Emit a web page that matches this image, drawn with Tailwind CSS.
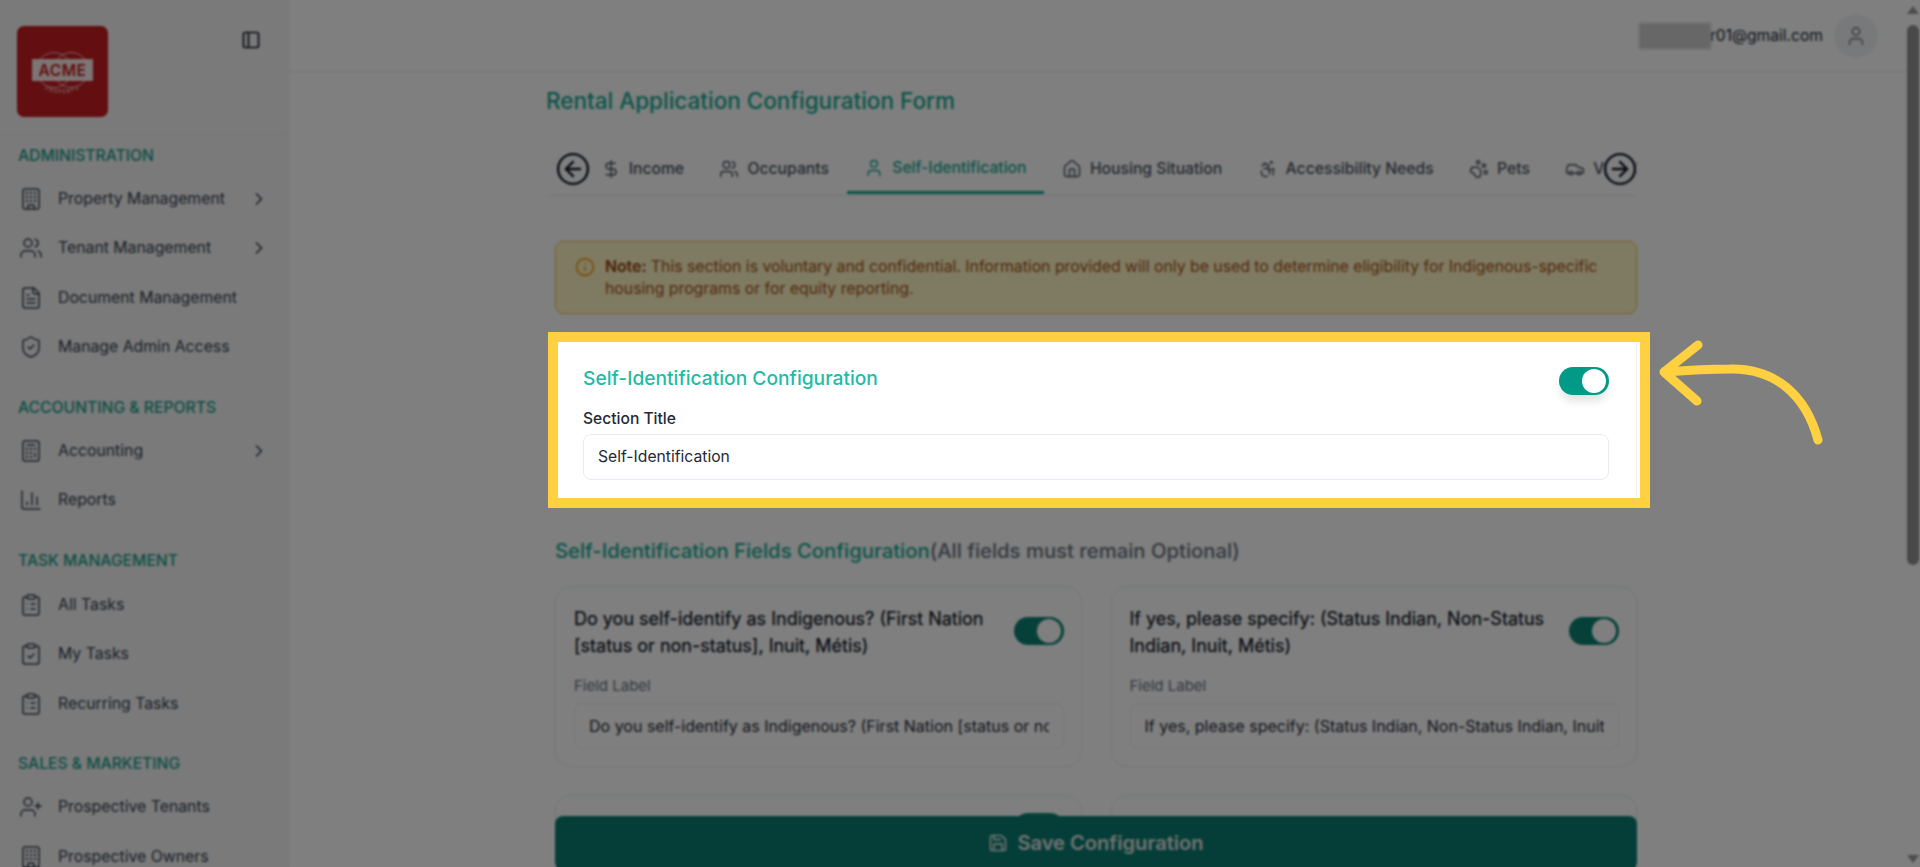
<!doctype html>
<html>
<head>
  <meta charset="UTF-8">
  <title>Rental Application Configuration Form</title>
  <script src="https://cdn.jsdelivr.net/npm/@tailwindcss/browser@4"></script>
</head>
<body class="font-['Inter','Liberation_Sans',sans-serif] bg-[#fcfffd] overflow-hidden">

<!-- icons -->
<svg class="hidden">
  <defs>
    <symbol id="i-building" viewBox="0 0 24 24"><rect width="16" height="20" x="4" y="2" rx="2" ry="2"/><path d="M9 22v-4h6v4"/><path stroke-width="2.3" d="M8 6h.01M16 6h.01M12 6h.01M12 10h.01M12 14h.01M16 10h.01M16 14h.01M8 10h.01M8 14h.01"/></symbol>
    <symbol id="i-users" viewBox="0 0 24 24"><path d="M16 21v-2a4 4 0 0 0-4-4H6a4 4 0 0 0-4 4v2"/><circle cx="9" cy="7" r="4"/><path d="M22 21v-2a4 4 0 0 0-3-3.87"/><path d="M16 3.13a4 4 0 0 1 0 7.75"/></symbol>
    <symbol id="i-file" viewBox="0 0 24 24"><path d="M15 2H6a2 2 0 0 0-2 2v16a2 2 0 0 0 2 2h12a2 2 0 0 0 2-2V7Z"/><path d="M14 2v4a2 2 0 0 0 2 2h4"/><path d="M10 9H8"/><path d="M16 13H8"/><path d="M16 17H8"/></symbol>
    <symbol id="i-shield" viewBox="0 0 24 24"><path d="M20 13c0 5-3.5 7.5-7.66 8.95a1 1 0 0 1-.67-.01C7.5 20.5 4 18 4 13V6a1 1 0 0 1 1-1c2 0 4.5-1.2 6.24-2.72a1.17 1.17 0 0 1 1.52 0C14.51 3.81 17 5 19 5a1 1 0 0 1 1 1z"/><path d="m9 12 2 2 4-4"/></symbol>
    <symbol id="i-calc" viewBox="0 0 24 24"><rect width="16" height="20" x="4" y="2" rx="2"/><line x1="8" x2="16" y1="6" y2="6"/><line x1="16" x2="16" y1="14" y2="18"/><path stroke-width="2.3" d="M16 10h.01M12 10h.01M8 10h.01M12 14h.01M8 14h.01M12 18h.01M8 18h.01"/></symbol>
    <symbol id="i-chart" viewBox="0 0 24 24"><path d="M3 3v16a2 2 0 0 0 2 2h16"/><path d="M18 17V9"/><path d="M13 17V5"/><path d="M8 17v-3"/></symbol>
    <symbol id="i-list" viewBox="0 0 24 24"><rect width="8" height="4" x="8" y="2" rx="1" ry="1"/><path d="M16 4h2a2 2 0 0 1 2 2v14a2 2 0 0 1-2 2H6a2 2 0 0 1-2-2V6a2 2 0 0 1 2-2h2"/><path d="M12 11h4"/><path d="M12 16h4"/><path d="M8 11h.01"/><path d="M8 16h.01"/></symbol>
    <symbol id="i-check" viewBox="0 0 24 24"><rect width="8" height="4" x="8" y="2" rx="1" ry="1"/><path d="M16 4h2a2 2 0 0 1 2 2v14a2 2 0 0 1-2 2H6a2 2 0 0 1-2-2V6a2 2 0 0 1 2-2h2"/><path d="m9 14 2 2 4-4"/></symbol>
    <symbol id="i-userplus" viewBox="0 0 24 24"><path d="M16 21v-2a4 4 0 0 0-4-4H6a4 4 0 0 0-4 4v2"/><circle cx="9" cy="7" r="4"/><line x1="19" x2="19" y1="8" y2="14"/><line x1="22" x2="16" y1="11" y2="11"/></symbol>
    <symbol id="i-user" viewBox="0 0 24 24"><path d="M19 21v-2a4 4 0 0 0-4-4H9a4 4 0 0 0-4 4v2"/><circle cx="12" cy="7" r="4"/></symbol>
    <symbol id="i-chev" viewBox="0 0 24 24"><path d="m9 18 6-6-6-6"/></symbol>
    <symbol id="i-dollar" viewBox="0 0 24 24"><line x1="12" x2="12" y1="2" y2="22"/><path d="M17 5H9.5a3.5 3.5 0 0 0 0 7h5a3.5 3.5 0 0 1 0 7H6"/></symbol>
    <symbol id="i-house" viewBox="0 0 24 24"><path d="M15 21v-8a1 1 0 0 0-1-1h-4a1 1 0 0 0-1 1v8"/><path d="M3 10a2 2 0 0 1 .709-1.528l7-5.999a2 2 0 0 1 2.582 0l7 5.999A2 2 0 0 1 21 10v9a2 2 0 0 1-2 2H5a2 2 0 0 1-2-2z"/></symbol>
    <symbol id="i-access" viewBox="0 0 24 24"><circle cx="16" cy="4" r="1"/><path d="m18 19 1-7-6 1"/><path d="m5 8 3-3 5.5 3-2.36 3.5"/><path d="M4.24 14.5a5 5 0 0 0 6.88 6"/><path d="M13.76 17.5a5 5 0 0 0-6.88-6"/></symbol>
    <symbol id="i-paw" viewBox="0 0 24 24"><circle cx="11" cy="4" r="2"/><circle cx="18" cy="8" r="2"/><circle cx="20" cy="16" r="2"/><path d="M9 10a5 5 0 0 1 5 5v3.5a3.5 3.5 0 0 1-6.84 1.045Q6.52 17.48 4.46 16.84A3.5 3.5 0 0 1 5.5 10Z"/></symbol>
    <symbol id="i-car" viewBox="0 0 24 24"><path d="M19 17h2c.6 0 1-.4 1-1v-3c0-.9-.7-1.7-1.5-1.9C18.7 10.6 16 10 16 10s-1.3-1.4-2.2-2.3c-.5-.4-1.1-.7-1.8-.7H5c-.6 0-1.1.4-1.4.9l-1.4 2.9A3.7 3.7 0 0 0 2 12v4c0 .6.4 1 1 1h2"/><circle cx="7" cy="17" r="2"/><path d="M9 17h6"/><circle cx="17" cy="17" r="2"/></symbol>
  </defs>
</svg>

<div class="relative flex h-[867px] w-[1920px] overflow-hidden">

  <!-- sidebar -->
  <aside class="w-[289px] shrink-0 h-full bg-[#f5f5f5] border-r border-[#eceeee] overflow-hidden text-[#374151] text-[15.8px]">
    <div class="h-[135px] border-b border-[#e8e8e8] pl-[17px] pt-[26px] flex items-start justify-between pr-[27px]">
      <svg class="w-[91px] h-[91px] rounded-[7px]" viewBox="0 0 91 91">
        <rect width="91" height="91" fill="#c61c20"/>
        <g fill="none" stroke="#fff" stroke-opacity=".75" stroke-width="1">
          <circle cx="37" cy="44" r="17.5"/>
          <circle cx="54" cy="44" r="17.5"/>
        </g>
        <rect x="15" y="33" width="61" height="22" fill="#fff" fill-opacity=".9"/>
        <text x="45.5" y="50" text-anchor="middle" font-size="15.5" font-weight="600" letter-spacing=".6" fill="#c61c20">ACME</text>
        <path id="logoarc" d="M26 63 Q45.5 72 65 63" fill="none"/>
        <text font-size="5.5" letter-spacing="1" fill="#fff" fill-opacity=".9"><textPath href="#logoarc" startOffset="50%" text-anchor="middle">PROPERTY</textPath></text>
      </svg>
      <svg class="w-5 h-5 mt-[4px] text-[#111827]" viewBox="0 0 24 24" fill="none" stroke="currentColor" stroke-width="2" stroke-linecap="round" stroke-linejoin="round"><rect width="18" height="18" x="3" y="3" rx="2"/><path d="M9 3v18"/></svg>
    </div>

    <nav class="pt-[11px]">
      <h3 class="pl-[18px] h-5 leading-5 font-medium text-[15.7px] text-[#17a08c]">ADMINISTRATION</h3>
      <ul class="mt-2">
        <li class="h-[49.5px] pl-[19px] pr-[19px] flex items-center"><svg class="w-6 h-6 shrink-0 fill-none stroke-current stroke-[1.5] [stroke-linecap:round] [stroke-linejoin:round]"><use href="#i-building"/></svg><span class="ml-[15px] flex-1">Property Management</span><svg class="w-5 h-5 fill-none stroke-current stroke-2 [stroke-linecap:round] [stroke-linejoin:round]"><use href="#i-chev"/></svg></li>
        <li class="h-[49.5px] pl-[19px] pr-[19px] flex items-center"><svg class="w-6 h-6 shrink-0 fill-none stroke-current stroke-[1.5] [stroke-linecap:round] [stroke-linejoin:round]"><use href="#i-users"/></svg><span class="ml-[15px] flex-1">Tenant Management</span><svg class="w-5 h-5 fill-none stroke-current stroke-2 [stroke-linecap:round] [stroke-linejoin:round]"><use href="#i-chev"/></svg></li>
        <li class="h-[49.5px] pl-[19px] pr-[19px] flex items-center"><svg class="w-6 h-6 shrink-0 fill-none stroke-current stroke-[1.5] [stroke-linecap:round] [stroke-linejoin:round]"><use href="#i-file"/></svg><span class="ml-[15px] flex-1">Document Management</span></li>
        <li class="h-[49.5px] pl-[19px] pr-[19px] flex items-center"><svg class="w-6 h-6 shrink-0 fill-none stroke-current stroke-[1.5] [stroke-linecap:round] [stroke-linejoin:round]"><use href="#i-shield"/></svg><span class="ml-[15px] flex-1">Manage Admin Access</span></li>
      </ul>

      <h3 class="mt-[26px] pl-[18px] h-5 leading-5 font-medium text-[15.7px] text-[#17a08c]">ACCOUNTING &amp; REPORTS</h3>
      <ul class="mt-[8px]">
        <li class="h-[49.5px] pl-[19px] pr-[19px] flex items-center"><svg class="w-6 h-6 shrink-0 fill-none stroke-current stroke-[1.5] [stroke-linecap:round] [stroke-linejoin:round]"><use href="#i-calc"/></svg><span class="ml-[15px] flex-1">Accounting</span><svg class="w-5 h-5 fill-none stroke-current stroke-2 [stroke-linecap:round] [stroke-linejoin:round]"><use href="#i-chev"/></svg></li>
        <li class="h-[49.5px] pl-[19px] pr-[19px] flex items-center"><svg class="w-6 h-6 shrink-0 fill-none stroke-current stroke-[1.5] [stroke-linecap:round] [stroke-linejoin:round]"><use href="#i-chart"/></svg><span class="ml-[15px] flex-1">Reports</span></li>
      </ul>

      <h3 class="mt-[26px] pl-[18px] h-5 leading-5 font-medium text-[15.7px] text-[#17a08c]">TASK MANAGEMENT</h3>
      <ul class="mt-[9px]">
        <li class="h-[49.5px] pl-[19px] pr-[19px] flex items-center"><svg class="w-6 h-6 shrink-0 fill-none stroke-current stroke-[1.5] [stroke-linecap:round] [stroke-linejoin:round]"><use href="#i-list"/></svg><span class="ml-[15px] flex-1">All Tasks</span></li>
        <li class="h-[49.5px] pl-[19px] pr-[19px] flex items-center"><svg class="w-6 h-6 shrink-0 fill-none stroke-current stroke-[1.5] [stroke-linecap:round] [stroke-linejoin:round]"><use href="#i-check"/></svg><span class="ml-[15px] flex-1">My Tasks</span></li>
        <li class="h-[49.5px] pl-[19px] pr-[19px] flex items-center"><svg class="w-6 h-6 shrink-0 fill-none stroke-current stroke-[1.5] [stroke-linecap:round] [stroke-linejoin:round]"><use href="#i-list"/></svg><span class="ml-[15px] flex-1">Recurring Tasks</span></li>
      </ul>

      <h3 class="mt-[25px] pl-[18px] h-5 leading-5 font-medium text-[15.7px] text-[#17a08c]">SALES &amp; MARKETING</h3>
      <ul class="mt-[9px]">
        <li class="h-[49.5px] pl-[19px] pr-[19px] flex items-center"><svg class="w-6 h-6 shrink-0 fill-none stroke-current stroke-[1.5] [stroke-linecap:round] [stroke-linejoin:round]"><use href="#i-userplus"/></svg><span class="ml-[15px] flex-1">Prospective Tenants</span></li>
        <li class="h-[49.5px] pl-[19px] pr-[19px] flex items-center"><svg class="w-6 h-6 shrink-0 fill-none stroke-current stroke-[1.5] [stroke-linecap:round] [stroke-linejoin:round]"><use href="#i-building"/></svg><span class="ml-[15px] flex-1">Prospective Owners</span></li>
      </ul>
    </nav>
  </aside>

  <!-- main column -->
  <main class="flex-1 min-w-0 h-full flex flex-col">
    <header class="h-[72px] shrink-0 border-b border-[#e5e7eb] flex items-center justify-end pr-[28px]">
      <div class="flex items-center text-[15.6px] text-[#1f2937] pt-[1px]">
        <span class="relative pl-[71px]"><span class="absolute left-0 -top-[1px] w-[72px] h-[26px] bg-[#cfcfcf] blur-[1px]"></span>r01@gmail.com</span>
      </div>
      <div class="ml-[11px] w-11 h-11 rounded-full bg-[#f1f3f5] flex items-center justify-center text-[#8b9099]">
        <svg class="w-[22px] h-[22px] fill-none stroke-current stroke-2 [stroke-linecap:round] [stroke-linejoin:round]"><use href="#i-user"/></svg>
      </div>
    </header>

    <div class="relative flex-1 min-h-0 overflow-hidden">
      <div class="ml-[257px] w-[1091px]">
        <h1 class="mt-[15px] text-[22.5px] leading-7 font-medium text-[#17a994]">Rental Application Configuration Form</h1>

        <!-- tabs -->
        <div class="relative mt-[29px] h-[52px] bg-white border-b border-[#e5e7eb] overflow-hidden">
          <div class="flex items-center h-full whitespace-nowrap text-[15.7px] font-medium text-[#4b5563] pl-[37px] pb-[1px]">
            <div class="h-full flex items-center gap-2 px-[17.7px]"><svg class="w-5 h-5 fill-none stroke-current stroke-[1.75] [stroke-linecap:round] [stroke-linejoin:round]"><use href="#i-dollar"/></svg>Income</div>
            <div class="h-full flex items-center gap-2 px-[17.7px]"><svg class="w-5 h-5 fill-none stroke-current stroke-[1.75] [stroke-linecap:round] [stroke-linejoin:round]"><use href="#i-users"/></svg>Occupants</div>
            <div class="h-full flex items-center gap-2 px-[17.7px] text-[#17a994] border-b-[3px] border-[#17a994]"><svg class="w-5 h-5 fill-none stroke-current stroke-[1.75] [stroke-linecap:round] [stroke-linejoin:round]"><use href="#i-user"/></svg>Self-Identification</div>
            <div class="h-full flex items-center gap-2 px-[17.7px]"><svg class="w-5 h-5 fill-none stroke-current stroke-[1.75] [stroke-linecap:round] [stroke-linejoin:round]"><use href="#i-house"/></svg>Housing Situation</div>
            <div class="h-full flex items-center gap-2 px-[17.7px]"><svg class="w-5 h-5 fill-none stroke-current stroke-[1.75] [stroke-linecap:round] [stroke-linejoin:round]"><use href="#i-access"/></svg>Accessibility Needs</div>
            <div class="h-full flex items-center gap-2 px-[17.7px]"><svg class="w-5 h-5 fill-none stroke-current stroke-[1.75] [stroke-linecap:round] [stroke-linejoin:round]"><use href="#i-paw"/></svg>Pets</div>
            <div class="h-full flex items-center gap-2 px-[17.7px]"><svg class="w-5 h-5 fill-none stroke-current stroke-[1.75] [stroke-linecap:round] [stroke-linejoin:round]"><use href="#i-car"/></svg>Vehicles</div>
          </div>
          <div class="absolute left-[10px] top-[8px] w-[34px] h-[34px] rounded-full bg-white text-[#111827]">
            <svg class="w-[34px] h-[34px]" viewBox="0 0 24 24" fill="none" stroke="currentColor" stroke-width="1.7" stroke-linecap="round" stroke-linejoin="round"><circle cx="12" cy="12" r="10.5"/><path d="M17 12H7"/><path d="m12 7-5 5 5 5"/></svg>
          </div>
          <div class="absolute right-[0px] top-[8px] w-[34px] h-[34px] rounded-full bg-white text-[#111827]">
            <svg class="w-[34px] h-[34px]" viewBox="0 0 24 24" fill="none" stroke="currentColor" stroke-width="1.7" stroke-linecap="round" stroke-linejoin="round"><circle cx="12" cy="12" r="10.5"/><path d="M7 12h10"/><path d="m12 17 5-5-5-5"/></svg>
          </div>
        </div>

        <div class="ml-[9px]">
          <!-- note -->
          <div class="mt-[45px] h-[73px] rounded-lg border border-[#f6c155] bg-[#fff5c4] flex pl-[19px] pr-[20px] pt-[14px] text-[15.8px] leading-[22px] text-[#a3531a]">
            <svg class="w-5 h-5 shrink-0 mt-[1px] text-[#f59e0b]" viewBox="0 0 24 24" fill="none" stroke="currentColor" stroke-width="2" stroke-linecap="round" stroke-linejoin="round"><circle cx="12" cy="12" r="10"/><path d="M12 16v-4"/><path d="M12 8h.01"/></svg>
            <p class="ml-[10px]"><strong class="font-semibold text-[#92400e]">Note:</strong> This section is voluntary and confidential. Information provided will only be used to determine eligibility for Indigenous-specific housing programs or for equity reporting.</p>
          </div>

          <!-- highlighted section card, sits above the dim layer -->
          <section class="relative z-20 mt-[25px] h-[169px] p-7">
            <div class="absolute -left-[7px] -right-[13px] -top-[7px] bottom-0 -z-10 bg-white border-[10px] border-[#ffd040]">
              <div class="absolute right-[3px] top-0 bottom-0 w-px bg-[#eef0f4]"></div>
            </div>
            <div class="flex items-start justify-between">
              <h2 class="text-[19.2px] leading-[20px] mt-[1px] font-medium text-[#1fbba6]">Self-Identification Configuration</h2>
              <span class="relative block w-[50px] h-[28px] rounded-full bg-[#009a87] shadow-[0_8px_10px_-2px_rgba(0,0,0,0.12)]"><span class="absolute right-[3px] top-[2px] w-6 h-6 rounded-full bg-white"></span></span>
            </div>
            <label class="block mt-[13.5px] h-5 leading-5 text-[15.6px] font-medium text-[#1f2937]">Section Title</label>
            <div class="mt-[5px] h-[46px] rounded-lg border border-[#e8ebf2] flex items-center px-[14px] text-[15.7px] text-[#1f2937]">Self-Identification</div>
          </section>

          <h2 class="mt-[29px] text-[20.3px] leading-7 font-medium text-[#17a994]">Self-Identification Fields Configuration<span class="text-[#6b7280]">(All fields must remain Optional)</span></h2>

          <div class="mt-[21px] grid grid-cols-2 gap-x-[29px] gap-y-[28px]">
            <div class="h-[181px] rounded-2xl border border-[#e8ebf0] bg-white pl-[18px] pr-[17px] pt-[18px]">
              <div class="flex justify-between gap-4">
                <p class="text-[18px] leading-[27px] font-normal text-[#111827] [-webkit-text-stroke:0.25px_#111827]">Do you self-identify as Indigenous? (First Nation [status or non-status], Inuit, Métis)</p>
                <span class="relative block shrink-0 w-[50px] h-[28px] mt-[12px] rounded-full bg-[#0c8373]"><span class="absolute right-[3px] top-[2px] w-6 h-6 rounded-full bg-white"></span></span>
              </div>
              <div class="mt-[17px] text-[15px] leading-5 text-[#6b7280]">Field Label</div>
              <div class="mt-[7px] h-[46px] rounded-lg border border-[#e8ebf0] px-[14px] flex items-center text-[16px] text-[#1f2937]"><span class="block overflow-hidden whitespace-nowrap">Do you self-identify as Indigenous? (First Nation [status or non-status], Inuit, Métis)</span></div>
            </div>
            <div class="h-[181px] rounded-2xl border border-[#e8ebf0] bg-white pl-[18px] pr-[17px] pt-[18px]">
              <div class="flex justify-between gap-4">
                <p class="text-[18px] leading-[27px] font-normal text-[#111827] [-webkit-text-stroke:0.25px_#111827]">If yes, please specify: (Status Indian, Non-Status Indian, Inuit, Métis)</p>
                <span class="relative block shrink-0 w-[50px] h-[28px] mt-[12px] rounded-full bg-[#0c8373]"><span class="absolute right-[3px] top-[2px] w-6 h-6 rounded-full bg-white"></span></span>
              </div>
              <div class="mt-[17px] text-[15px] leading-5 text-[#6b7280]">Field Label</div>
              <div class="mt-[7px] h-[46px] rounded-lg border border-[#e8ebf0] px-[14px] flex items-center text-[16px] text-[#1f2937]"><span class="block overflow-hidden whitespace-nowrap">If yes, please specify: (Status Indian, Non-Status Indian, Inuit, Métis)</span></div>
            </div>
            <div class="h-[181px] rounded-2xl border border-[#e8ebf0] bg-white px-[17px] pt-[17px] flex justify-end">
              <span class="relative block shrink-0 w-[50px] h-[28px] rounded-full bg-[#0c8373]"></span>
            </div>
            <div class="h-[181px] rounded-2xl border border-[#e8ebf0] bg-white"></div>
          </div>
        </div>
      </div>

      <!-- sticky save button -->
      <button class="absolute left-[266px] -bottom-[3px] w-[1082px] h-[54px] rounded-lg bg-[#0a7c70] text-[20.1px] font-semibold text-[#e3e6e5] flex items-center justify-center gap-[9px]">
        <svg class="w-5 h-5" viewBox="0 0 24 24" fill="none" stroke="currentColor" stroke-width="2" stroke-linecap="round" stroke-linejoin="round"><path d="M15.2 3a2 2 0 0 1 1.4.6l3.8 3.8a2 2 0 0 1 .6 1.4V19a2 2 0 0 1-2 2H5a2 2 0 0 1-2-2V5a2 2 0 0 1 2-2z"/><path d="M17 21v-7a1 1 0 0 0-1-1H8a1 1 0 0 0-1 1v7"/><path d="M7 3v4a1 1 0 0 0 1 1h7"/></svg>
        Save Configuration
      </button>
    </div>
  </main>

  <!-- scrollbar -->
  <div class="w-[14px] shrink-0 h-full flex flex-col items-center justify-between pt-[6px] pb-[4px] bg-[#fcfffd] relative">
    <span class="w-0 h-0 border-x-[6px] border-x-transparent border-b-[8px] border-b-[#9a9a9a]"></span>
    <span class="absolute left-[1px] top-[25px] w-3 h-[540px] rounded-full bg-[#929292]"></span>
    <span class="w-0 h-0 border-x-[6px] border-x-transparent border-t-[8px] border-t-[#9a9a9a]"></span>
  </div>

  <!-- dim layer -->
  <div class="absolute inset-0 z-10 bg-black/50 backdrop-blur-[1px]"></div>

  <!-- annotation arrow on the dim layer -->
  <svg class="absolute inset-0 z-30 pointer-events-none" width="1920" height="867" fill="none" stroke="#ffd040" stroke-width="9" stroke-linecap="round" stroke-linejoin="round">
    <path d="M1818 440C1806 395 1775 368 1730 369C1710 369 1690 370 1666 372"/>
    <path d="M1698 345L1664 372L1697 401"/>
  </svg>
</div>

</body>
</html>
